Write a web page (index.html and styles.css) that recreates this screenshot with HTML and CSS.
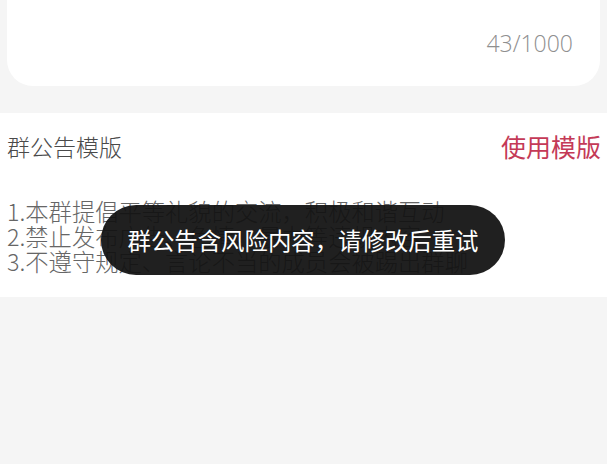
FILE: index.html
```html
<!DOCTYPE html>
<html lang="zh">
<head>
<meta charset="utf-8">
<link rel="stylesheet" href="styles.css">
</head>
<body>
<div class="page">
  <div class="card">
    <div class="counter">43/1000</div>
  </div>
  <div class="section">
    <div class="head">
      <div class="title">群公告模版</div>
      <div class="use">使用模版</div>
    </div>
    <div class="list">
      <div class="line">1.本群提倡平等礼貌的交流，积极和谐互动</div>
      <div class="line">2.禁止发布广告、色情、暴力等违规内容</div>
      <div class="line">3.不遵守规定、言论不当的成员会被踢出群聊</div>
    </div>
  </div>
  <div class="toast">群公告含风险内容，请修改后重试</div>
</div>
</body>
</html>
```
FILE: styles.css
```css
html, body {
  margin: 0;
  padding: 0;
  background: #f5f5f5;
}
.page {
  position: relative;
  width: 607px;
  height: 464px;
  overflow: hidden;
  font-family: "Noto Sans CJK SC", "Noto Sans", sans-serif;
  font-weight: 300;
}
.card {
  margin: 0 7px;
  height: 86px;
  background: #fff;
  border-radius: 0 0 26px 26px;
  display: flex;
  justify-content: flex-end;
  align-items: flex-start;
  padding-right: 27px;
  box-sizing: border-box;
}
.counter {
  margin-top: 23px;
  font-family: "Open Sans", "Noto Sans", sans-serif;
  font-weight: 300;
  font-size: 23px;
  line-height: 40px;
  color: #8f8f8f;
}
.section {
  margin-top: 27px;
  background: #fff;
  padding: 18px 7px 23px 7px;
}
.head {
  display: flex;
  justify-content: space-between;
  align-items: center;
  height: 30px;
}
.title {
  font-size: 23px;
  color: #4a4a4a;
  line-height: 30px;
}
.use {
  font-size: 25px;
  font-weight: 400;
  color: #c43a57;
  line-height: 30px;
  margin-right: -1px;
}
.list {
  margin-top: 38px;
  color: #666;
  font-size: 23.3px;
  line-height: 25px;
  white-space: nowrap;
}
.toast {
  position: absolute;
  left: 101px;
  top: 205px;
  width: 404px;
  height: 70px;
  border-radius: 35px;
  background: rgba(18, 18, 18, 0.94);
  color: #fff;
  font-size: 23.4px;
  font-weight: 400;
  display: flex;
  align-items: center;
  justify-content: center;
}
```
